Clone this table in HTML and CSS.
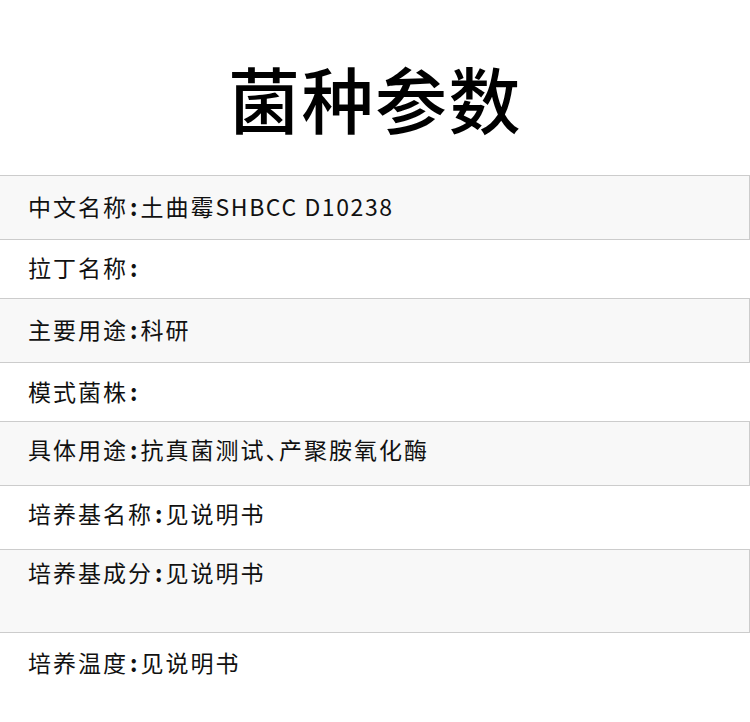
FILE: index.html
```html
<!DOCTYPE html>
<html lang="zh">
<head>
<meta charset="utf-8">
<title>菌种参数</title>
<link rel="stylesheet" href="styles.css">
</head>
<body>
<header class="head">
  <h1 class="title">菌种参数</h1>
</header>
<section class="table">
  <div class="row shade r1">中文名称<span class="colon">:</span>土曲霉<span class="latin">SHBCC D10238</span></div>
  <div class="row r2">拉丁名称<span class="colon">:</span></div>
  <div class="row shade r3">主要用途<span class="colon">:</span>科研</div>
  <div class="row r4">模式菌株<span class="colon">:</span></div>
  <div class="row shade r5">具体用途<span class="colon">:</span>抗真菌测试<span class="half">、</span>产聚胺氧化酶</div>
  <div class="row r6">培养基名称<span class="colon">:</span>见说明书</div>
  <div class="row shade r7">培养基成分<span class="colon">:</span>见说明书</div>
  <div class="row r8">培养温度<span class="colon">:</span>见说明书</div>
</section>
</body>
</html>
```
FILE: styles.css
```css
html, body {
  margin: 0;
  padding: 0;
  background: #ffffff;
}
body {
  width: 750px;
  height: 722px;
  overflow: hidden;
  font-family: "Noto Sans CJK SC", "Noto Sans", sans-serif;
  color: #111111;
}
.head {
  height: 175px;
  padding-top: 61px;
  box-sizing: border-box;
}
.title {
  margin: 0;
  text-align: center;
  font-size: 72px;
  line-height: 72px;
  font-weight: 500;
  color: #000000;
  letter-spacing: 1.5px;
}
.table {
  display: flex;
  flex-direction: column;
}
.row {
  display: flex;
  align-items: flex-start;
  box-sizing: border-box;
  padding-left: 28px;
  font-size: 23px;
  letter-spacing: 2px;
  line-height: 30px;
  white-space: pre;
}
.colon {
  margin: 0 1px 0 2px;
  font-weight: 700;
}
.half {
  font-feature-settings: "halt" 1;
}
.latin {
  letter-spacing: 1.6px;
}
.shade {
  background: #f8f8f8;
  border-top: 1px solid #cccccc;
  border-bottom: 1px solid #cccccc;
  border-right: 1px solid #cccccc;
}
.r1 { height: 65px; padding-top: 15px; }
.r2 { height: 58px; padding-top: 12px; }
.r3 { height: 65px; padding-top: 15px; }
.r4 { height: 58px; padding-top: 13px; }
.r5 { height: 65px; padding-top: 12px; }
.r6 { height: 63px; padding-top: 12px; }
.r7 { height: 84px; padding-top: 7px; }
.r8 { height: 62px; padding-top: 14px; }
```
